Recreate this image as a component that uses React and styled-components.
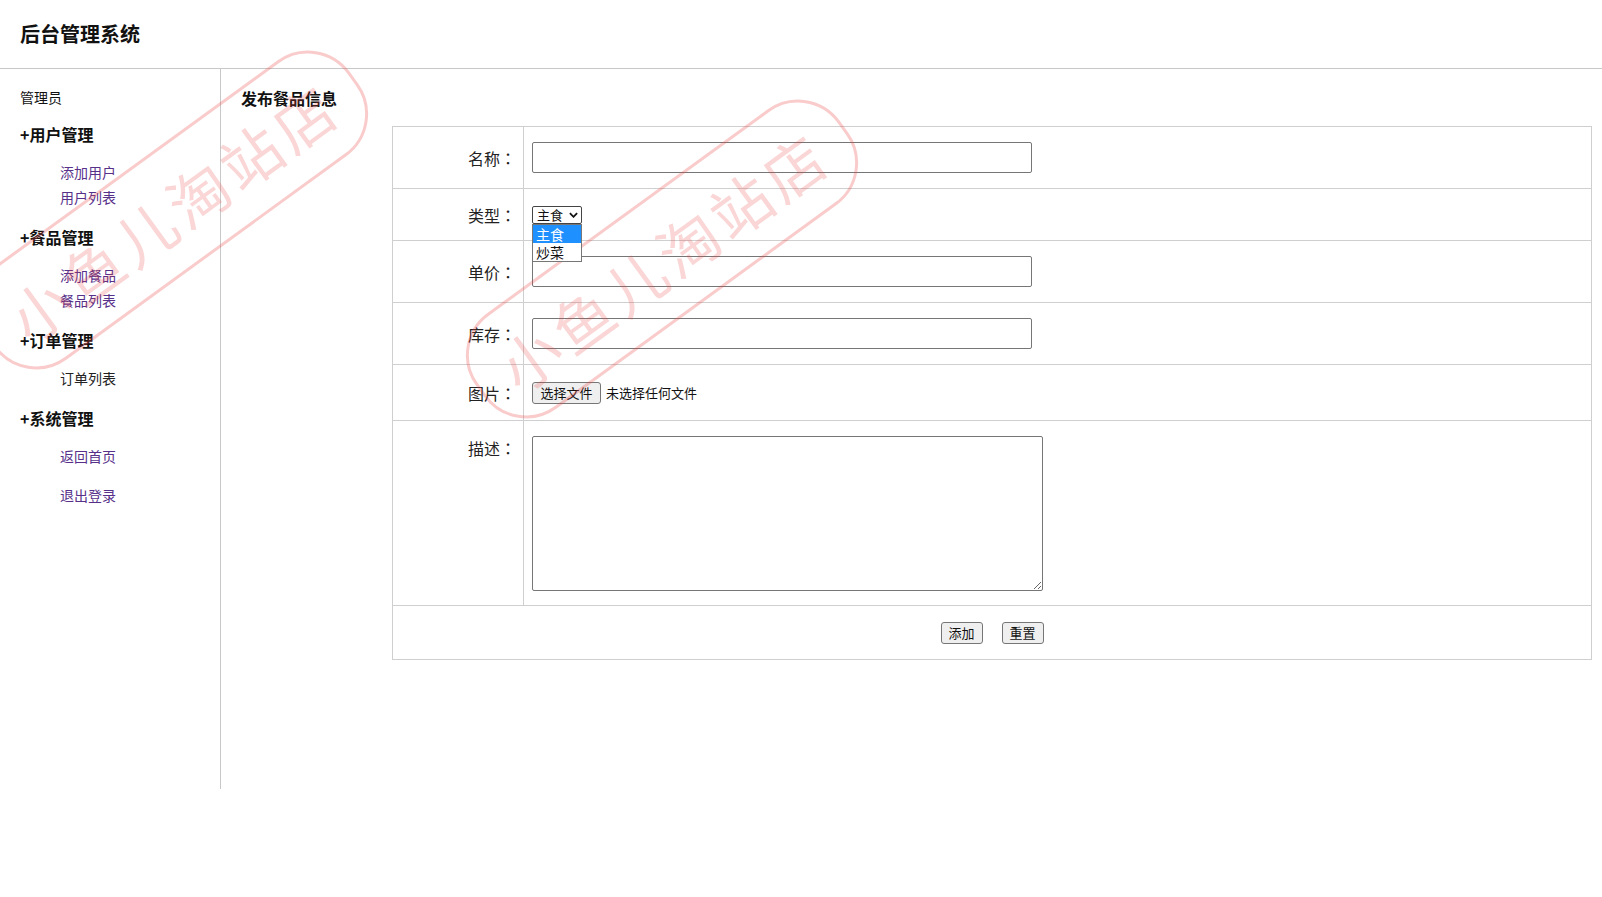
import React from "react";
import styled, { createGlobalStyle } from "styled-components";

const GlobalStyle = createGlobalStyle`
  html, body {
    margin: 0;
    padding: 0;
    background: #fff;
  }
  body {
    font-family: "Noto Sans CJK SC", "Noto Sans", sans-serif;
    color: #111;
  }
`;

const MENU = [
  { id: 1, title: "用户管理", links: ["添加用户", "用户列表"] },
  { id: 2, title: "餐品管理", links: ["添加餐品", "餐品列表"] },
  { id: 3, title: "订单管理", links: ["订单列表"], plain: true },
  { id: 4, title: "系统管理", links: ["返回首页", "退出登录"], spread: true },
];

const Label = ({ children, top }) => (
  <LabelCell $top={top}>
    {children}
    <Colon>：</Colon>
  </LabelCell>
);

export default function App() {
  return (
    <Page>
      <GlobalStyle />
      <Header>
        <SiteTitle>后台管理系统</SiteTitle>
      </Header>

      <Body>
        <Sidebar>
          <Admin>管理员</Admin>
          {MENU.map((group) => (
            <Group key={group.id}>
              <GroupTitle>+{group.title}</GroupTitle>
              <SubList>
                {group.links.map((name, i) => (
                  <SubItem key={name} $spaced={group.spread && i > 0}>
                    <SubLink href="#" $plain={group.plain}>
                      {name}
                    </SubLink>
                  </SubItem>
                ))}
              </SubList>
            </Group>
          ))}
        </Sidebar>

        <Main>
          <PageTitle>发布餐品信息</PageTitle>
          <FormTable>
            <tbody>
              <Row $h={62}>
                <Label>名称</Label>
                <ValueCell>
                  <TextInput type="text" />
                </ValueCell>
              </Row>
              <Row $h={52}>
                <Label>类型</Label>
                <ValueCell>
                  <SelectWrap>
                    <Select defaultValue="主食">
                      <option>主食</option>
                      <option>炒菜</option>
                    </Select>
                    <Chevron viewBox="0 0 10 6">
                      <path d="M1 1 L5 5 L9 1" fill="none" stroke="#111" strokeWidth="2" />
                    </Chevron>
                    <OptionList>
                      <Option $active>主食</Option>
                      <Option>炒菜</Option>
                    </OptionList>
                  </SelectWrap>
                </ValueCell>
              </Row>
              <Row $h={62}>
                <Label>单价</Label>
                <ValueCell>
                  <TextInput type="text" />
                </ValueCell>
              </Row>
              <Row $h={62}>
                <Label>库存</Label>
                <ValueCell>
                  <TextInput type="text" />
                </ValueCell>
              </Row>
              <Row $h={56}>
                <Label>图片</Label>
                <ValueCell>
                  <FileField>
                    <FormButton type="button" $w={69}>
                      选择文件
                    </FormButton>
                    <FileName>未选择任何文件</FileName>
                  </FileField>
                </ValueCell>
              </Row>
              <Row $h={185}>
                <Label top>描述</Label>
                <ValueCell $top>
                  <Description />
                </ValueCell>
              </Row>
              <Row $h={54}>
                <ActionCell colSpan={2}>
                  <Actions>
                    <FormButton type="submit" $w={42}>
                      添加
                    </FormButton>
                    <FormButton type="reset" $w={42}>
                      重置
                    </FormButton>
                  </Actions>
                </ActionCell>
              </Row>
            </tbody>
          </FormTable>
        </Main>
      </Body>

      <Stamp $x={172} $y={210}>小鱼儿淘站店</Stamp>
      <Stamp $x={662} $y={259}>小鱼儿淘站店</Stamp>
    </Page>
  );
}

const Page = styled.div`
  position: relative;
  width: 100%;
  height: 897px;
  overflow: hidden;
`;

const Header = styled.header`
  display: flex;
  align-items: center;
  height: 68px;
  padding-left: 20px;
  border-bottom: 1px solid #c8c8c8;
`;

const SiteTitle = styled.h1`
  margin: 0;
  font-size: 20px;
  line-height: 28px;
  font-weight: bold;
  color: #111;
`;

const Body = styled.div`
  display: flex;
`;

const Sidebar = styled.aside`
  box-sizing: border-box;
  width: 221px;
  height: 720px;
  padding: 18px 0 0 20px;
  border-right: 1px solid #c8c8c8;
`;

const Admin = styled.div`
  font-size: 14px;
  line-height: 20px;
`;

const Group = styled.div`
  margin-top: 14.5px;

  &:first-of-type {
    margin-top: 15px;
  }
`;

const GroupTitle = styled.div`
  font-size: 16px;
  line-height: 24px;
  font-weight: bold;
`;

const SubList = styled.ul`
  list-style: none;
  margin: 14.5px 0 0;
  padding: 0 0 0 40px;
`;

const SubItem = styled.li`
  font-size: 14px;
  line-height: 25px;
  margin-top: ${(p) => (p.$spaced ? "14px" : "0")};
`;

const SubLink = styled.a`
  color: ${(p) => (p.$plain ? "#222" : "#57308a")};
  text-decoration: none;
`;

const Main = styled.main`
  flex: 1;
  padding: 17px 0 0 20px;
`;

const PageTitle = styled.h3`
  margin: 0;
  font-size: 16px;
  line-height: 24px;
  font-weight: bold;
`;

const FormTable = styled.table`
  width: 1200px;
  margin: 16px 0 0 151px;
  border-collapse: collapse;
`;

const Row = styled.tr`
  height: ${(p) => p.$h}px;
`;

const LabelCell = styled.td`
  box-sizing: border-box;
  width: 131px;
  padding: ${(p) => (p.$top ? "15px 7px 0 0" : "0 7px 0 0")};
  border: 1px solid #cfcfcf;
  text-align: right;
  vertical-align: ${(p) => (p.$top ? "top" : "middle")};
  font-size: 16px;
  line-height: 24px;
  color: #222;
`;

/* centred full-width colon, as in the traditional CJK face */
const Colon = styled.span`
  font-family: "Noto Sans CJK TC", "Noto Sans CJK SC", sans-serif;
`;

const ValueCell = styled.td`
  padding: ${(p) => (p.$top ? "15px 0 0 8px" : "0 0 0 8px")};
  border: 1px solid #cfcfcf;
  vertical-align: ${(p) => (p.$top ? "top" : "middle")};
  font-size: 13px;
  line-height: 0;
`;

const ActionCell = styled.td`
  border: 1px solid #cfcfcf;
  vertical-align: middle;
`;

const TextInput = styled.input`
  box-sizing: border-box;
  width: 500px;
  height: 31px;
  margin: 0;
  border: 1px solid #767676;
  border-radius: 2px;
  font: inherit;
`;

const SelectWrap = styled.span`
  position: relative;
  display: inline-block;
  vertical-align: middle;
`;

const Select = styled.select`
  appearance: none;
  box-sizing: border-box;
  width: 50px;
  height: 18px;
  margin: 0;
  padding: 0 0 0 4px;
  border: 1px solid #444;
  border-radius: 2px;
  background: #fff;
  font-family: "Noto Sans CJK SC", sans-serif;
  font-size: 13px;
  line-height: 16px;
  color: #111;
`;

const Chevron = styled.svg`
  position: absolute;
  top: 6px;
  right: 4px;
  width: 9px;
  height: 6px;
  pointer-events: none;
`;

const OptionList = styled.ul`
  position: absolute;
  top: 18px;
  left: 0;
  box-sizing: border-box;
  width: 50px;
  margin: 0;
  padding: 0;
  list-style: none;
  background: #fff;
  border: 1px solid #777;
  z-index: 2;
`;

const Option = styled.li`
  padding: 0 3px;
  font-size: 14px;
  line-height: 18px;
  color: ${(p) => (p.$active ? "#fff" : "#111")};
  background: ${(p) => (p.$active ? "#1e90ff" : "#fff")};
`;

const FileField = styled.span`
  display: inline-flex;
  align-items: center;
  gap: 5px;
  vertical-align: middle;
`;

const FileName = styled.span`
  font-size: 13px;
  line-height: 22px;
  color: #111;
`;

const FormButton = styled.button`
  box-sizing: border-box;
  width: ${(p) => p.$w}px;
  height: 22px;
  padding: 0;
  border: 1px solid #767676;
  border-radius: 3px;
  background: #efefef;
  font-family: "Noto Sans CJK SC", sans-serif;
  font-size: 13px;
  line-height: 20px;
  color: #111;
`;

const Description = styled.textarea`
  box-sizing: border-box;
  display: block;
  width: 511px;
  height: 155px;
  margin: 0;
  border: 1px solid #767676;
  border-radius: 2px;
  font: inherit;
`;

const Actions = styled.div`
  display: flex;
  justify-content: center;
  gap: 19px;
`;

const Stamp = styled.div`
  position: absolute;
  left: ${(p) => p.$x}px;
  top: ${(p) => p.$y}px;
  box-sizing: border-box;
  width: 450px;
  height: 118px;
  margin: -59px 0 0 -225px;
  display: flex;
  align-items: center;
  justify-content: center;
  border: 3px solid rgba(232, 70, 70, 0.28);
  border-radius: 52px;
  transform: rotate(-36deg);
  font-size: 60px;
  letter-spacing: 5px;
  color: rgba(232, 70, 70, 0.22);
  pointer-events: none;
`;
